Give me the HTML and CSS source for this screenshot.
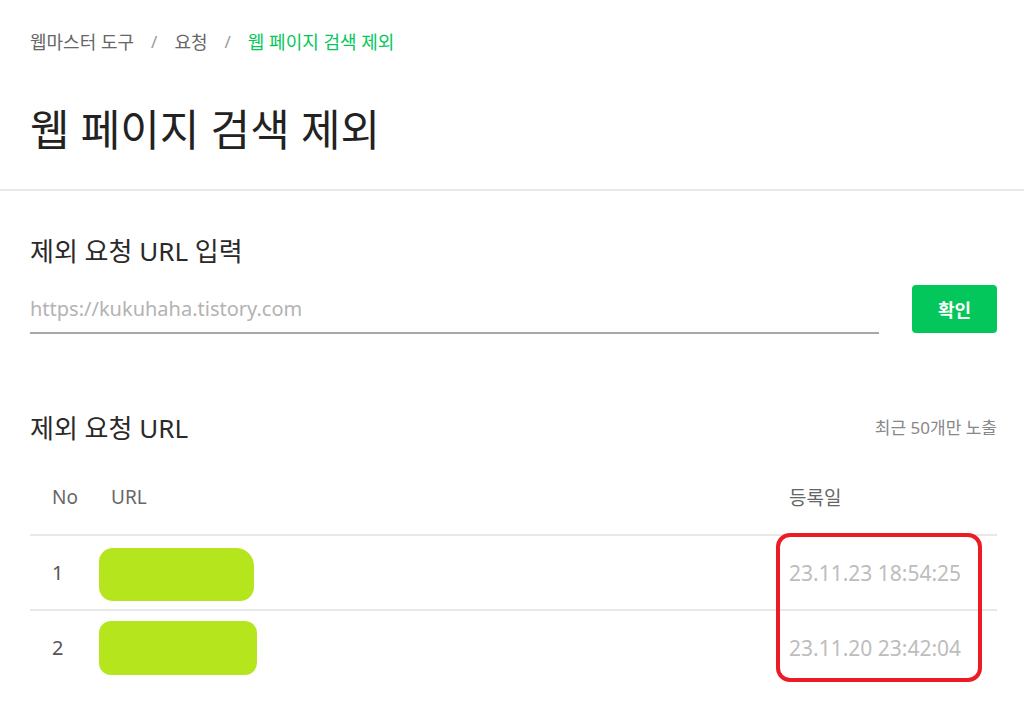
FILE: index.html
```html
<!DOCTYPE html>
<html lang="ko">
<head>
<meta charset="utf-8">
<title>웹 페이지 검색 제외</title>
<link rel="stylesheet" href="styles.css">
</head>
<body>
<header class="page-head">
  <nav class="crumbs">
    <span class="crumb">웹마스터 도구</span>
    <span class="sep">/</span>
    <span class="crumb">요청</span>
    <span class="sep">/</span>
    <span class="crumb current">웹 페이지 검색 제외</span>
  </nav>
  <h1 class="title">웹 페이지 검색 제외</h1>
</header>
<main class="content">
  <section class="request">
    <h2 class="section-title">제외 요청 URL 입력</h2>
    <form class="input-row">
      <input class="url-input" type="text" placeholder="https://kukuhaha.tistory.com">
      <button class="confirm" type="button">확인</button>
    </form>
  </section>
  <section class="list">
    <div class="list-head">
      <h2 class="section-title">제외 요청 URL</h2>
      <span class="note">최근 50개만 노출</span>
    </div>
    <div class="table">
      <div class="row head">
        <div class="cell no">No</div>
        <div class="cell url">URL</div>
        <div class="cell date">등록일</div>
      </div>
      <div class="row">
        <div class="cell no">1</div>
        <div class="cell url"><span class="blot blot-a"></span></div>
        <div class="cell date">23.11.23 18:54:25</div>
      </div>
      <div class="row">
        <div class="cell no">2</div>
        <div class="cell url"><span class="blot blot-b"></span></div>
        <div class="cell date">23.11.20 23:42:04</div>
      </div>
      <div class="highlight"></div>
    </div>
  </section>
</main>
</body>
</html>
```
FILE: styles.css
```css
* { box-sizing: border-box; }
html, body { margin: 0; padding: 0; background: #fff; }
body {
  font-family: "Noto Sans", "Noto Sans CJK KR", sans-serif;
  color: #222;
  overflow: hidden;
}
.page-head {
  padding: 29px 27px 30px 30px;
  border-bottom: 2px solid #e8e8e8;
}
.crumbs {
  display: flex;
  align-items: center;
  font-size: 18px;
  line-height: 26px;
  color: #666;
}
.sep {
  color: #9a9a9a;
  margin: 0 17px;
  font-size: 17px;
}
.crumb.current { color: #03c75a; }
.title {
  margin: 46px 0 0;
  font-size: 43px;
  line-height: 58px;
  font-weight: 400;
  color: #222;
}
.content {
  padding: 0 27px 0 30px;
}
.section-title {
  margin: 0;
  font-size: 26px;
  line-height: 34px;
  font-weight: 400;
  color: #2a2a2a;
}
.request { padding-top: 43px; }
.input-row {
  margin: 17px 0 0;
  display: flex;
  align-items: flex-end;
  gap: 33px;
}
.url-input {
  flex: 1;
  height: 49px;
  margin-bottom: -1px;
  border: 0;
  border-bottom: 2px solid #a8a8a8;
  padding: 0;
  font: inherit;
  font-size: 20px;
  color: #333;
  background: transparent;
  outline: none;
}
.url-input::placeholder { color: #b3b3b3; }
.confirm {
  width: 85px;
  height: 48px;
  border: 0;
  border-radius: 4px;
  background: #03c75a;
  color: #fff;
  font: inherit;
  font-size: 18px;
  font-weight: 700;
}
.list { padding-top: 78px; }
.list-head {
  display: flex;
  justify-content: space-between;
  align-items: center;
}
.note {
  font-size: 17px;
  color: #888;
  margin-top: -4px;
}
.table {
  position: relative;
  margin-top: 15px;
}
.row {
  display: grid;
  grid-template-columns: 81px 1fr 208px;
  height: 75px;
  align-items: center;
  border-top: 2px solid #e8e8e8;
}
.row.head { border-top: 0; height: 74px; }
.cell { font-size: 20px; color: #555; }
.row.head .cell { font-size: 19px; color: #666; }
.cell.no { padding-left: 22px; }
.cell.date { color: #bdbdbd; font-size: 21px; }
.row.head .cell.date { color: #666; }
.blot {
  display: inline-block;
  vertical-align: middle;
  margin-left: -12px;
  background: #b5e61d;
}
.blot-a { width: 155px; height: 53px; border-radius: 14px 18px 14px 14px; margin-top: 3px; }
.blot-b { width: 158px; height: 54px; border-radius: 12px; }
.highlight {
  position: absolute;
  left: 746px;
  top: 73px;
  width: 206px;
  height: 149px;
  border: 4px solid #ed1c24;
  border-radius: 14px;
}
```
